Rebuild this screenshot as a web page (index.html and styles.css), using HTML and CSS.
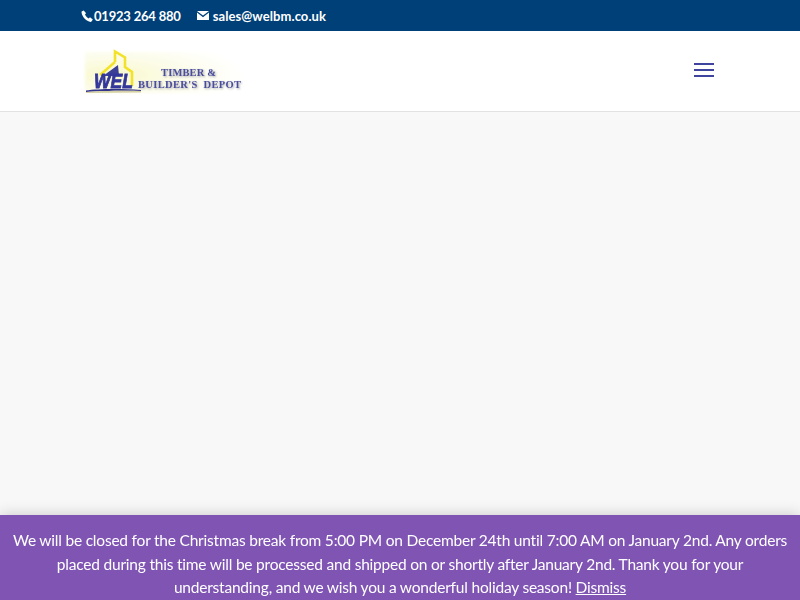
FILE: index.html
```html
<!DOCTYPE html>
<html lang="en">
<head>
  <meta charset="UTF-8">
  <meta name="viewport" content="width=device-width, initial-scale=1">
  <title>WEL Timber &amp; Builder's Depot</title>
  <link rel="stylesheet" href="styles.css">
</head>
<body>
  <div class="top-bar">
    <span class="contact contact-phone">
      <svg class="icon-phone" width="12" height="12" viewBox="0 0 12 12"><path d="M2.7 0.4 L0.6 1.6 C0.1 4.8 3.6 10.8 9.6 11.9 C10.5 11.8 11.3 10.6 11.8 9.5 L9 7.3 L7.7 8.4 C6.200 7.800 4.500 6 4 4.200 L5.100 3.200 Z" fill="#fff"/></svg>
      01923 264 880
    </span>
    <span class="contact contact-mail">
      <svg class="icon-mail" width="12" height="9" viewBox="0 0 12 9"><path d="M0 0 H12 L6 4.6 Z M0 1.6 L6 6.2 L12 1.6 V9 H0 Z" fill="#fff"/></svg>
      sales@welbm.co.uk
    </span>
  </div>

  <header class="site-header">
    <a class="logo" href="#">
      <svg width="160" height="48" viewBox="0 0 160 48">
        <defs>
          <radialGradient id="glow" cx="0.18" cy="0.55" r="0.85">
            <stop offset="0" stop-color="#f8f8cc"/>
            <stop offset="0.45" stop-color="#fcfce8"/>
            <stop offset="1" stop-color="#ffffff"/>
          </radialGradient>
          <filter id="soft"><feGaussianBlur stdDeviation="0.4"/></filter>
          <filter id="shade" x="-10%" y="-10%" width="120%" height="120%"><feGaussianBlur stdDeviation="1.5"/></filter>
        </defs>
        <rect x="2" y="4" width="156" height="41" fill="url(#glow)" filter="url(#shade)"/>
        <g filter="url(#soft)">
          <path d="M32 14 L32 3.500 L42 9.500 L42 19 L49 24 L49 38" fill="none" stroke="#f2e22a" stroke-width="2.600"/>
          <path d="M32 14 L17 27" fill="none" stroke="#f2e22a" stroke-width="2.400"/>
          <path d="M20 28 L35 17 L36 28 Z" fill="#3b3f96"/>
          <text class="logo-wel" x="11" y="40" textLength="39" lengthAdjust="spacingAndGlyphs">WEL</text>
          <path d="M3 42.500 C15 40.500 40 40.500 58 42 L58 43 C40 42.500 15 43 3 44 Z" fill="#33348a"/>
          <path d="M3 44 C15 43 40 42.500 58 43 L58 44.500 L3 45 Z" fill="#d4d0a4"/>
          <text class="logo-text" x="78" y="28" textLength="55" lengthAdjust="spacing">TIMBER &amp;</text>
          <text class="logo-text" x="55" y="40" textLength="103" lengthAdjust="spacing" xml:space="preserve">BUILDER'S  DEPOT</text>
        </g>
      </svg>
    </a>
    <button class="menu-toggle" aria-label="Menu">
      <span></span><span></span><span></span>
    </button>
  </header>

  <main class="page-body"></main>

  <p class="store-notice">We will be closed for the Christmas break from 5:00 PM on December 24th until 7:00 AM on January 2nd. Any orders placed during this time will be processed and shipped on or shortly after January 2nd. Thank you for your understanding, and we wish you a wonderful holiday season! <a href="#">Dismiss</a></p>
</body>
</html>
```

FILE: styles.css
```css
html, body { height: 100%; }
body { margin: 0; background: #f8f8f8; font-family: 'Lato', 'Noto Sans', sans-serif; overflow: hidden; }

.top-bar { display: flex; align-items: center; height: 31px; padding-left: 81px; background: #004078; color: #fff; font-size: 13px; font-weight: bold; }
.contact { display: flex; align-items: center; white-space: nowrap; }
.contact-phone { gap: 1px; letter-spacing: -0.2px; }
.contact-mail { gap: 4px; margin-left: 16px; letter-spacing: 0.08px; }

.site-header { display: flex; align-items: center; justify-content: space-between; box-sizing: border-box; height: 81px; padding: 0 86px 0 83px; background: #fff; border-bottom: 1px solid #e2e2e2; }
.logo { display: block; height: 48px; margin-top: 1px; }
.logo-wel { font-family: 'Liberation Sans', sans-serif; font-size: 21px; font-weight: bold; font-style: italic; fill: #34379a; stroke: #34379a; stroke-width: 0.8px; }
.logo-text { font-family: 'Liberation Serif', serif; font-size: 10.5px; font-weight: bold; fill: #4a4d9e; filter: drop-shadow(1px 1px 1px #a8a8a8); }

.menu-toggle { display: flex; flex-direction: column; gap: 4px; width: 20px; margin-bottom: 2px; padding: 0; border: 0; background: none; }
.menu-toggle span { display: block; height: 2px; background: #3f459c; }

.store-notice { position: fixed; left: 0; right: 0; bottom: 0; margin: 0; padding: 14px 8px 0; height: 85px; box-sizing: border-box; background: #7f54b3; color: #fff; font-size: 15.5px; line-height: 23.7px; letter-spacing: -0.21px; text-align: center; box-shadow: 0 0 14px rgba(0, 0, 0, 0.2); overflow: hidden; }
.store-notice a { color: #fff; }
```
